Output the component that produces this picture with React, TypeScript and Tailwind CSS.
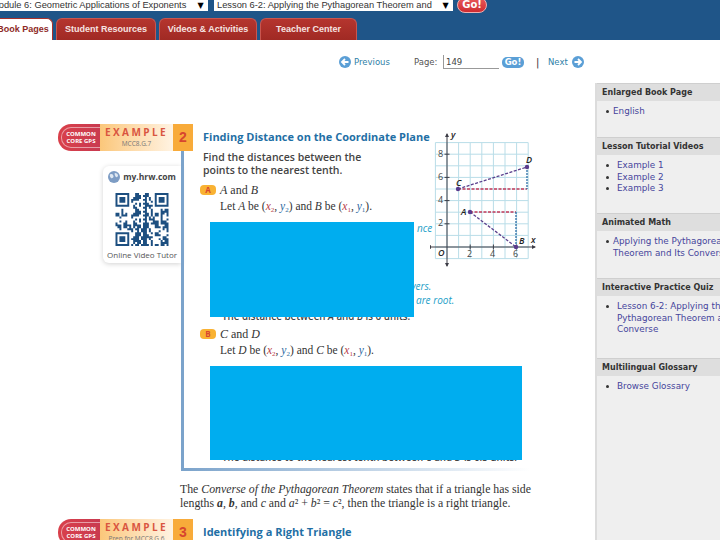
const sansUi = "font-['DejaVu_Sans',sans-serif]";

const sideSections = [
  { title: "Enlarged Book Page", h: "h-[36px]", pad: "pl-[7px]", items: [["English"]] },
  { title: "Lesson Tutorial Videos", h: "h-[58px]", pad: "pl-[11px]", items: [["Example 1"], ["Example 2"], ["Example 3"]] },
  { title: "Animated Math", h: "h-[47px]", pad: "pl-[7px]", items: [["Applying the Pythagorean", "Theorem and Its Converse"]] },
  { title: "Interactive Practice Quiz", h: "h-[62px]", pad: "pl-[11px]", items: [["Lesson 6-2: Applying the", "Pythagorean Theorem and", "Converse"]] },
  { title: "Multilingual Glossary", h: "h-[70px]", pad: "pl-[11px]", items: [["Browse Glossary"]] },
];

function CircleArrow({ dir }: { dir: "left" | "right" }) {
  return (
    <svg width="12" height="12" viewBox="0 0 12 12" className="shrink-0">
      <circle cx="6" cy="6" r="6" fill="#5b9fd6" />
      <path d={dir === "left" ? "M9.5 6H4M6 3L3 6l3 3" : "M2.5 6H8M6 3l3 3-3 3"} fill="none" stroke="#fff" strokeWidth="1.8" />
    </svg>
  );
}

function SelectBox({ text, width, textOffset }: { text: string; width: string; textOffset: string }) {
  return (
    <div className={`${width} h-[11px] bg-white flex items-center`}>
      <div className="flex-1 min-w-0 overflow-hidden">
        <div className={`${textOffset} text-[9.300px] leading-[11px] text-[#333] whitespace-nowrap font-['Liberation_Sans',sans-serif]`}>{text}</div>
      </div>
      <span className="w-[15px] shrink-0 text-[8px] leading-[10px] text-black text-center">▼</span>
    </div>
  );
}

function Tab({ label, width, active }: { label: string; width: string; active?: boolean }) {
  return (
    <div
      className={`${width} h-[22px] rounded-t-[6px] border border-b-0 flex items-center justify-center text-[9px] font-bold whitespace-nowrap font-['Liberation_Sans',sans-serif] ${
        active ? "bg-white border-[#a8322c] text-[#8e2a26]" : "bg-linear-to-b from-[#b5352e] to-[#a02a24] border-[#c9564f] text-[#f6e4e2]"
      }`}
    >
      {label}
    </div>
  );
}

function QrCode() {
  const size = 27;
  const cells: string[] = [];
  const inFinder = (x: number, y: number) =>
    (x < 8 && y < 8) || (x >= size - 8 && y < 8) || (x < 8 && y >= size - 8);
  for (let y = 0; y < size; y++) {
    for (let x = 0; x < size; x++) {
      if (inFinder(x, y)) continue;
      if ((x * x * 7 + y * 13 + x * y * 5 + ((x ^ y) * 3)) % 5 < 2) cells.push(`M${x} ${y}h1v1h-1z`);
    }
  }
  const finder = (x: number, y: number) =>
    `M${x} ${y}h7v7h-7zM${x + 1} ${y + 1}v5h5v-5zM${x + 2} ${y + 2}h3v3h-3z`;
  return (
    <svg width="54" height="53" viewBox="0 0 27 27" className="mx-auto">
      <path d={cells.join("")} fill="#1d4f80" />
      <path d={finder(0, 0) + finder(20, 0) + finder(0, 20)} fill="#1d4f80" fillRule="evenodd" />
    </svg>
  );
}

function Globe() {
  return (
    <svg width="12" height="12" viewBox="0 0 12 12">
      <circle cx="6" cy="6" r="6" fill="#7d9cc4" />
      <path d="M2 3.5c2-1 3 0 3.5 1.5S4 8 3 7 1.5 4.5 2 3.5zM7 2c1.5 0 3 1 3 2.5S8 7 7.500 5.500 6 2.500 7 2z" fill="#dfe8f2" />
    </svg>
  );
}

function ExampleBanner({ n, standard }: { n: string; standard: string }) {
  return (
    <div className="flex h-[27px] w-[135px] shrink-0">
      <div className="w-[42px] bg-linear-to-r from-[#d9404a] to-[#c93a50] rounded-l-[13px] pl-[3px] py-[3px]">
        <div className="h-full rounded-l-[10px] border border-r-0 border-white/50 flex flex-col items-center justify-center text-white text-[6px] leading-[7px] font-bold font-['Open_Sans',sans-serif] whitespace-nowrap">
          <span>COMMON</span>
          <span>CORE GPS</span>
        </div>
      </div>
      <div className="w-[73px] bg-linear-to-r from-[#fbc77a] to-[#fff3e2] flex flex-col items-center pt-[2px] font-['Open_Sans',sans-serif]">
        <span className="text-[10px] leading-[13px] font-bold tracking-[2.4px] text-[#d9553f]">EXAMPLE</span>
        <span className="text-[6.500px] leading-[9px] text-[#777] whitespace-nowrap">{standard}</span>
      </div>
      <div className="w-[20px] bg-[#f8ab3a] flex items-center justify-center text-[14px] font-bold text-[#d7452f] font-['Liberation_Sans',sans-serif]">
        {n}
      </div>
    </div>
  );
}

function Badge({ letter }: { letter: string }) {
  return (
    <span className="w-[16px] h-[10px] rounded-[4px] bg-[#f9b233] flex items-center justify-center text-[8px] font-bold text-[#d7452f] font-['Open_Sans',sans-serif]">
      {letter}
    </span>
  );
}

function Graph() {
  const xs = [435.4, 447, 458.6, 470.2, 481.8, 493.4, 505, 516.6, 528.2];
  const ys = [142.6, 154.2, 165.8, 177.4, 189, 200.6, 212.2, 223.8, 235.400, 247, 258.6];
  return (
    <svg width="110" height="140" viewBox="430 130 110 140" className="font-['Open_Sans',sans-serif]">
      {xs.map(x => <line key={x} x1={x} x2={x} y1="142.600" y2="258.600" stroke="#b9dde8" strokeWidth="1" />)}
      {ys.map(y => <line key={y} x1="435.400" x2="528.200" y1={y} y2={y} stroke="#b9dde8" strokeWidth="1" />)}
      <path d="M447 134V266M428 247H535" stroke="#3c3c46" strokeWidth="1" />
      <path d="M447 133l-2 4h4zM447 267l-2-4h4zM427 247l4-2v4zM536 247l-4-2v4z" fill="#3c3c46" />
      {[470.2, 493.4, 516.6].map(x => <line key={x} x1={x} x2={x} y1="244.500" y2="249.500" stroke="#3c3c46" />)}
      {[154.2, 177.4, 200.6, 223.8].map(y => <line key={y} x1="444.500" x2="449.500" y1={y} y2={y} stroke="#3c3c46" />)}
      <path d="M470 212H516M458 189H527" stroke="#c43a5a" strokeWidth="1.300" strokeDasharray="3 1.500" />
      <path d="M516 212V247M527 167V189" stroke="#2b6ea6" strokeWidth="1.300" strokeDasharray="2 1" />
      <path d="M470 212L516 247M458 189L527 167" stroke="#5a3f8c" strokeWidth="1.300" strokeDasharray="3 1.500" />
      {[[470, 212], [516, 247], [458, 189], [527, 167]].map(([cx, cy]) => (
        <circle key={cx} cx={cx} cy={cy} r="2.200" fill="#5a3a8c" />
      ))}
      <g fontSize="9" fill="#444">
        <text x="438" y="157">8</text>
        <text x="438" y="180">6</text>
        <text x="438" y="203">4</text>
        <text x="438" y="226">2</text>
        <text x="467" y="257">2</text>
        <text x="490" y="257">4</text>
        <text x="513" y="257">6</text>
      </g>
      <g fontSize="9" fill="#222" fontStyle="italic" fontWeight="600">
        <text x="451" y="138">y</text>
        <text x="531" y="243">x</text>
        <text x="438" y="256">O</text>
        <text x="461" y="215">A</text>
        <text x="519" y="244">B</text>
        <text x="456" y="186">C</text>
        <text x="526" y="163">D</text>
      </g>
    </svg>
  );
}

function Sub({ c, n }: { c: string; n: string }) {
  return <sub className="text-[7px] leading-none not-italic" style={{ color: c }}>{n}</sub>;
}

function Pair({ x, y }: { x: string; y: string }) {
  return (
    <>
      (<i className="text-[#b8404a]">x<Sub c="#b8404a" n={x} /></i>, <i className="text-[#2d6a9f]">y<Sub c="#2d6a9f" n={y} /></i>)
    </>
  );
}

export default function App() {
  return (
    <div className={`relative w-[720px] h-[540px] overflow-hidden bg-white flex flex-col ${sansUi}`}>
      {/* Top bar with the selects and tabs */}
      <header className="h-[40px] shrink-0 bg-[#1f5588] flex flex-col">
        <div className="flex h-[18px] items-start">
          <SelectBox width="w-[208px]" textOffset="-ml-[9px]" text="Module 6: Geometric Applications of Exponents" />
          <div className="w-[6px]" />
          <SelectBox width="w-[239px]" textOffset="ml-[3px]" text="Lesson 6-2: Applying the Pythagorean Theorem and" />
          <div className="-mt-[3px] ml-[4px] w-[30px] h-[16px] rounded-full bg-linear-to-b from-[#e8585a] to-[#cf2a30] border border-[#f0b0b0] text-white text-[10px] font-bold leading-[14px] text-center">
            Go!
          </div>
        </div>
        <div className="flex gap-[3px] -ml-[7px]">
          <Tab active width="w-[60px]" label="Book Pages" />
          <Tab width="w-[100px]" label="Student Resources" />
          <Tab width="w-[98px]" label="Videos & Activities" />
          <Tab width="w-[97px]" label="Teacher Center" />
        </div>
      </header>

      <div className="flex flex-1 min-h-0">
        <main className="w-[595px] shrink-0">
          {/* Pager */}
          <div className="h-[43px] pl-[339px] pt-[15px] flex items-start text-[8.500px] text-[#2f7fa8]">
            <div className="flex items-center h-[14px]">
              <CircleArrow dir="left" />
              <span className="ml-[3px] w-[60px]">Previous</span>
              <span className="w-[29px] text-[#555]">Page:</span>
              <input
                readOnly
                value="149"
                className="w-[56px] h-[14px] border-l border-b border-[#999] pl-[2px] text-[8.5px] text-[#444] outline-none"
              />
              <span className="ml-[3px] w-[22px] h-[11px] rounded-[5px] bg-[#5b9fd6] text-white font-bold text-center leading-[11px]">Go!</span>
              <span className="ml-[12px] w-[12px] text-[#333] text-[10px]">|</span>
              <span className="w-[24px]">Next</span>
              <CircleArrow dir="right" />
            </div>
          </div>

          {/* Book page */}
          <div className="relative pl-[58px] pt-[41px]">
            <div className="flex items-center">
              <ExampleBanner n="2" standard="MCC8.G.7" />
              <h2 className="ml-[10px] text-[11px] font-bold text-[#1f6fa5] font-['Open_Sans',sans-serif] whitespace-nowrap">
                Finding Distance on the Coordinate Plane
              </h2>
            </div>

            <div className="flex">
              {/* Video tutor card */}
              <div className="ml-[45px] mt-[15px] w-[78px] h-[97px] shrink-0 bg-white rounded-l-[6px] shadow-[0_1px_5px_rgba(0,0,0,0.18)] pt-[5px] font-['Open_Sans',sans-serif]">
                <div className="flex items-center justify-center gap-[3px] mb-[10px] text-[8.500px] font-bold text-[#444] leading-[12px]">
                  <Globe />
                  my.hrw.com
                </div>
                <QrCode />
                <div className="mt-[3px] text-[8px] text-[#555] text-center whitespace-nowrap">Online Video Tutor</div>
              </div>

              <section className="relative w-[349px] h-[320px] border-l-[3px] border-[#7ba3cb] pl-[19px] text-[#333]">
                <p className="text-[10.500px] leading-[13px] font-semibold text-[#444] font-['Open_Sans',sans-serif]">
                  Find the distances between the
                  <br />
                  points to the nearest tenth.
                </p>
                <div className="mt-[6px] flex items-center gap-[2px] -ml-[3px] font-['Liberation_Serif',serif] text-[12px] leading-[14px]">
                  <Badge letter="A" />
                  <span className="ml-[2px]"><i>A</i> and <i>B</i></span>
                </div>
                <p className="mt-[2px] pl-[17px] font-['Liberation_Serif',serif] text-[11.500px] leading-[14px] whitespace-nowrap">
                  Let <i>A</i> be <Pair x="2" y="2" /> and <i>B</i> be <Pair x="1" y="1" />.
                </p>

                <div className="mt-[15px] h-[83px] relative italic text-[10px] leading-[12px] text-[#1ea0c8] font-['Open_Sans',sans-serif] whitespace-nowrap">
                  <span className="absolute left-[214px] -top-[6px]">nce</span>
                  <span className="absolute left-[208px] top-[52px]">vers.</span>
                  <span className="absolute left-[213px] top-[66px]">are root.</span>
                </div>
                <p className="pl-[19px] h-[11px] font-['Open_Sans',sans-serif] font-semibold text-[9.800px] leading-[11px] whitespace-nowrap text-[#444]">
                  The distance between <i>A</i> and <i>B</i> is 6 units.
                </p>

                <div className="mt-[5px] flex items-center gap-[2px] -ml-[3px] font-['Liberation_Serif',serif] text-[12px] leading-[14px]">
                  <Badge letter="B" />
                  <span className="ml-[2px]"><i>C</i> and <i>D</i></span>
                </div>
                <p className="mt-[2px] pl-[17px] font-['Liberation_Serif',serif] text-[11.500px] leading-[14px] whitespace-nowrap">
                  Let <i>D</i> be <Pair x="2" y="2" /> and <i>C</i> be <Pair x="1" y="1" />.
                </p>
                <p className="mt-[95px] pl-[19px] h-[11px] font-['Open_Sans',sans-serif] font-semibold text-[9.800px] leading-[11px] whitespace-nowrap text-[#444]">
                  The distance to the nearest tenth between <i>C</i> and <i>D</i> is 6.3 units.
                </p>
                <div className="absolute -left-[3px] right-0 bottom-0 h-[3px] bg-linear-to-r from-[#7ba3cb] to-transparent" />
              </section>
            </div>

            <p className="ml-[122px] mt-[11px] w-[360px] font-['Liberation_Serif',serif] text-[11.800px] leading-[14px] text-[#333] whitespace-nowrap">
              The <i>Converse of the Pythagorean Theorem</i> states that if a triangle has side
              <br />
              lengths <b><i>a</i></b>, <b><i>b</i></b>, and <i>c</i> and <i>a</i>² + <i>b</i>² = <i>c</i>², then the triangle is a right triangle.
            </p>

            <div className="flex items-center mt-[9px]">
              <ExampleBanner n="3" standard="Prep for MCC8.G.6" />
              <h2 className="ml-[10px] text-[11px] font-bold text-[#1f6fa5] font-['Open_Sans',sans-serif] whitespace-nowrap">
                Identifying a Right Triangle
              </h2>
            </div>

            {/* Figure sitting on the page, and the two blue cover-ups */}
            <div className="absolute left-[430px] top-[47px]"><Graph /></div>
            <div className="absolute left-[210px] top-[139px] w-[204px] h-[95px] bg-[#00adef]" />
            <div className="absolute left-[210px] top-[283px] w-[312px] h-[94px] bg-[#00adef]" />
          </div>
        </main>

        {/* Right rail */}
        <aside className="flex-1 mt-[43px] bg-[#efefef] border-l-2 border-[#dcdcdc]">
          {sideSections.map(s => (
            <div key={s.title}>
              <h3 className="h-[18px] bg-[#dedede] border-t border-[#cfcfcf] pl-[5px] text-[8px] leading-[17px] font-bold text-[#333] whitespace-nowrap">{s.title}</h3>
              <ul className={`${s.h} pt-[5px] pl-[9px] text-[8.800px] leading-[11.500px] text-[#46459c]`}>
                {s.items.map(lines => (
                  <li key={lines[0]} className={`relative whitespace-nowrap ${s.pad}`}>
                    <span className="absolute left-0 top-[4px] w-[3px] h-[3px] rounded-full bg-[#333]" />
                    {lines.map(l => <div key={l}>{l}</div>)}
                  </li>
                ))}
              </ul>
            </div>
          ))}
        </aside>
      </div>
    </div>
  );
}
